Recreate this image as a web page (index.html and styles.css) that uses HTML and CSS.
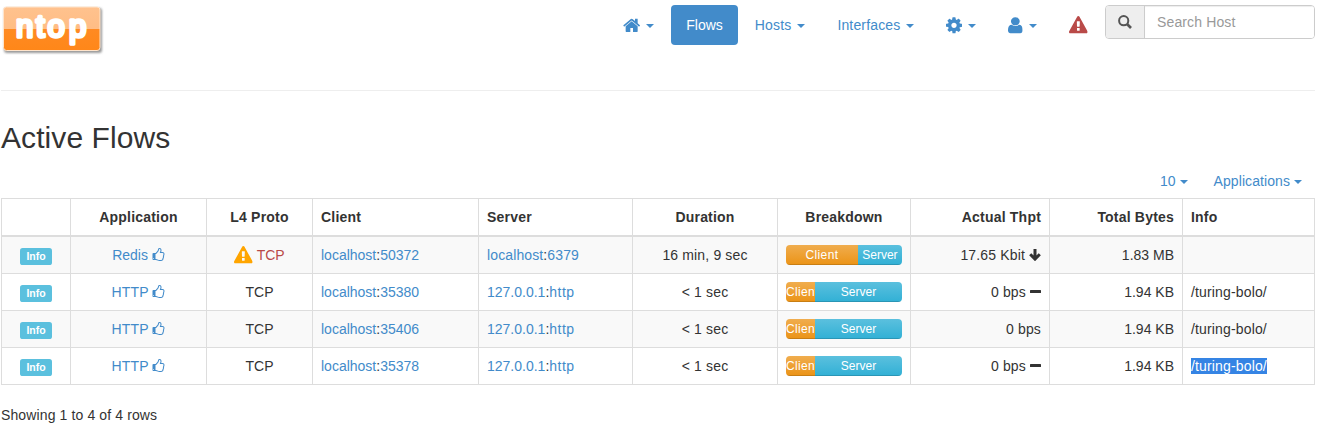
FILE: index.html
```html
<!DOCTYPE html>
<html lang="en">
<head>
<meta charset="utf-8">
<title>Active Flows</title>
<link rel="stylesheet" href="styles.css">
</head>
<body>
<svg class="defs" aria-hidden="true">
  <symbol id="home" viewBox="64 0 1664 1792"><path d="M1472 992v480q0 26-19 45t-45 19h-384v-384h-256v384h-384q-26 0-45-19t-19-45v-480q0-1 .5-3t.5-3l575-474 575 474q1 2 1 6zm223-69l-62 74q-8 9-21 11h-3q-13 0-21-7l-692-577-692 577q-12 8-24 7-13-2-21-11l-62-74q-8-10-7-23.5t11-21.5l719-599q32-26 76-26t76 26l244 204v-195q0-14 9-23t23-9h192q14 0 23 9t9 23v408l219 182q10 8 11 21.5t-7 23.5z"/></symbol>
  <symbol id="cog" viewBox="128 0 1536 1792"><path d="M1152 896q0-106-75-181t-181-75-181 75-75 181 75 181 181 75 181-75 75-181zm512-109v222q0 12-8 23t-20 13l-185 28q-19 54-39 91 35 50 107 138 10 12 10 25t-9 23q-27 37-99 108t-94 71q-12 0-26-9l-138-108q-44 23-91 38-16 136-29 186-7 28-36 28h-222q-14 0-24.5-8.5t-11.5-21.5l-28-184q-49-16-90-37l-141 107q-10 9-25 9-14 0-25-11-126-114-165-168-7-10-7-23 0-12 8-23 15-21 51-66.5t54-70.5q-27-50-41-99l-183-27q-13-2-21-12.5t-8-23.5v-222q0-12 8-23t19-13l186-28q14-46 39-92-40-57-107-138-10-12-10-24 0-10 9-23 26-36 98.5-107.5t94.500-71.500q13 0 26 10l138 107q44-23 91-38 16-136 29-186 7-28 36-28h222q14 0 24.5 8.5t11.5 21.5l28 184q49 16 90 37l142-107q9-9 24-9 13 0 25 10 129 119 165 170 7 8 7 22 0 12-8 23-15 21-51 66.5t-54 70.5q26 50 41 98l183 28q13 2 21 12.5t8 23.5z"/></symbol>
  <symbol id="user" viewBox="256 0 1280 1792" preserveAspectRatio="none"><path d="M1536 1399q0 109-62.5 187t-150.5 78h-854q-88 0-150.5-78t-62.5-187q0-85 8.5-160.5t31.5-152 58.5-131 94-89 134.5-34.5q131 128 313 128t313-128q76 0 134.5 34.5t94 89 58.5 131 31.5 152 8.5 160.5zm-256-887q0 159-112.5 271.5t-271.5 112.5-271.5-112.5-112.5-271.5 112.5-271.5 271.5-112.5 271.5 112.5 112.5 271.5z"/></symbol>
  <symbol id="warning" viewBox="0 0 1792 1792"><path d="M1024 1375v-190q0-14-9.5-23.5t-22.5-9.5h-192q-13 0-22.5 9.5t-9.5 23.5v190q0 14 9.5 23.5t22.5 9.5h192q13 0 22.5-9.5t9.5-23.5zm-2-374l18-459q0-12-10-19-13-11-24-11h-220q-11 0-24 11-10 7-10 21l17 457q0 10 10 16.5t24 6.5h185q14 0 23.5-6.5t10.5-16.5zm-14-934l768 1408q35 63-2 126-17 29-46.5 46t-63.5 17h-1536q-34 0-63.5-17t-46.5-46q-37-63-2-126l768-1408q17-31 47-49t65-18 65 18 47 49z"/></symbol>
  <symbol id="thumb" viewBox="64 0 1664 1792"><path d="M320 1344q0-26-19-45t-45-19q-27 0-45.5 19t-18.5 45q0 27 18.5 45.5t45.5 18.5q26 0 45-18.5t19-45.5zm1216-576q0-51-39-89.5t-89-38.5h-352q0-58 48-159.5t48-160.5q0-98-32-145t-128-47q-26 26-38 85t-30.5 125.5-59.5 109.5q-22 23-77 91-4 5-23 30t-31.5 41-34.5 42.5-40 44-38.5 35.5-40 27-35.5 9h-32v640h32q13 0 31.5 3t33 6.5 38 11 35 11.5 35.5 12.5 29 10.5q211 73 342 73h121q192 0 192-167 0-26-5-56 30-16 47.5-52.5t17.5-73.5-18-69q53-50 53-119 0-25-10-55.5t-25-47.5q32-1 53.5-47t21.5-81zm128-1q0 89-49 163 9 33 9 69 0 77-38 144 3 21 3 43 0 101-60 178 1 139-85 219.5t-227 80.5h-129q-96 0-189.5-22.5t-216.5-65.5q-116-40-138-40h-288q-53 0-90.5-37.5t-37.5-90.5v-640q0-53 37.5-90.5t90.5-37.5h274q36-24 137-155 58-75 107-128 24-25 35.5-85.5t30.5-126.5 62-108q39-37 90-37 84 0 151 32.5t102 101.5 35 186q0 93-48 192h176q104 0 180 76t76 179z"/></symbol>
</svg>

<header class="masthead">
  <svg class="logo" viewBox="0 0 104 56">
    <defs>
      <linearGradient id="shade" x1="0" y1="0" x2="0" y2="1"><stop offset="0" stop-color="#ffc28e"/><stop offset=".5" stop-color="#ffbd85"/><stop offset=".5" stop-color="#ff8a22"/><stop offset="1" stop-color="#ff8719"/></linearGradient>
      <filter id="soft" x="-10%" y="-10%" width="120%" height="120%"><feGaussianBlur stdDeviation=".8"/></filter>
    </defs>
    <rect class="logo-shadow" x="4" y="8" width="98" height="45" rx="3" filter="url(#soft)"/>
    <rect class="logo-tile" x="3.5" y="7" width="96.500" height="43.500" rx="3"/>
    <text class="logo-text" x="16 36 47.500 69" y="36.500">ntop</text>
  </svg>
  <nav class="nav">
    <a class="nav-item"><svg class="icon icon-home"><use href="#home"/></svg> <b class="caret"></b></a>
    <a class="nav-item active">Flows</a>
    <a class="nav-item wide">Hosts <b class="caret"></b></a>
    <a class="nav-item wide">Interfaces <b class="caret"></b></a>
    <a class="nav-item"><svg class="icon icon-cog"><use href="#cog"/></svg> <b class="caret"></b></a>
    <a class="nav-item"><svg class="icon icon-user"><use href="#user"/></svg> <b class="caret"></b></a>
    <a class="nav-item alert"><svg class="icon icon-warning"><use href="#warning"/></svg></a>
  </nav>
  <div class="search">
    <span class="search-addon"><svg class="search-icon" viewBox="0 0 14 14"><circle cx="5.700" cy="5.700" r="4.600"/><path d="M9 9l4 4"/></svg></span>
    <input class="search-input" type="text" placeholder="Search Host">
  </div>
</header>

<h2 class="title">Active Flows</h2>
<div class="toolbar">
  <a class="tool">10 <b class="caret"></b></a>
  <a class="tool">Applications <b class="caret"></b></a>
</div>

<table class="flows">
  <colgroup><col class="c-key"><col class="c-app"><col class="c-proto"><col class="c-client"><col class="c-server"><col class="c-duration"><col class="c-breakdown"><col class="c-thpt"><col class="c-bytes"><col class="c-info"></colgroup>
  <thead>
    <tr><th></th><th>Application</th><th>L4 Proto</th><th class="left">Client</th><th class="left">Server</th><th>Duration</th><th>Breakdown</th><th class="right">Actual Thpt</th><th class="right">Total Bytes</th><th class="left">Info</th></tr>
  </thead>
  <tbody>
    <tr>
      <td><span class="label">Info</span></td>
      <td><a>Redis <svg class="thumb"><use href="#thumb"/></svg></a></td>
      <td class="danger"><svg class="icon icon-warning amber"><use href="#warning"/></svg> TCP</td>
      <td class="left"><a>localhost</a>:<a>50372</a></td>
      <td class="left endpoint"><a>localhost</a>:<a>6379</a></td>
      <td class="wide">16 min, 9 sec</td>
      <td><div class="progress"><div class="bar client" style="width:62%">Client</div><div class="bar server" style="width:38%">Server</div></div></td>
      <td class="right wide">17.65 Kbit <svg class="trend" viewBox="0 0 12 12"><path d="M6 0v9M1.200 5.300L6 10.100l4.800-4.800"/></svg></td>
      <td class="right">1.83 MB</td>
      <td class="left"></td>
    </tr>
    <tr>
      <td><span class="label">Info</span></td>
      <td><a class="endpoint">HTTP <svg class="thumb"><use href="#thumb"/></svg></a></td>
      <td>TCP</td>
      <td class="left"><a>localhost</a>:<a>35380</a></td>
      <td class="left"><a>127.0.0.1</a>:<a class="scheme">http</a></td>
      <td class="wide">&lt; 1 sec</td>
      <td><div class="progress"><div class="bar client" style="width:25%">Client</div><div class="bar server" style="width:75%">Server</div></div></td>
      <td class="right wide">0 bps <svg class="minus" viewBox="0 0 11 12"><rect y="4" width="11" height="3" rx=".5"/></svg></td>
      <td class="right">1.94 KB</td>
      <td class="left wide">/turing-bolo/</td>
    </tr>
    <tr>
      <td><span class="label">Info</span></td>
      <td><a class="endpoint">HTTP <svg class="thumb"><use href="#thumb"/></svg></a></td>
      <td>TCP</td>
      <td class="left"><a>localhost</a>:<a>35406</a></td>
      <td class="left"><a>127.0.0.1</a>:<a class="scheme">http</a></td>
      <td class="wide">&lt; 1 sec</td>
      <td><div class="progress"><div class="bar client" style="width:25%">Client</div><div class="bar server" style="width:75%">Server</div></div></td>
      <td class="right wide">0 bps</td>
      <td class="right">1.94 KB</td>
      <td class="left wide">/turing-bolo/</td>
    </tr>
    <tr>
      <td><span class="label">Info</span></td>
      <td><a class="endpoint">HTTP <svg class="thumb"><use href="#thumb"/></svg></a></td>
      <td>TCP</td>
      <td class="left"><a>localhost</a>:<a>35378</a></td>
      <td class="left"><a>127.0.0.1</a>:<a class="scheme">http</a></td>
      <td class="wide">&lt; 1 sec</td>
      <td><div class="progress"><div class="bar client" style="width:25%">Client</div><div class="bar server" style="width:75%">Server</div></div></td>
      <td class="right wide">0 bps <svg class="minus" viewBox="0 0 11 12"><rect y="4" width="11" height="3" rx=".5"/></svg></td>
      <td class="right">1.94 KB</td>
      <td class="left wide"><span class="selected">/turing-bolo/</span></td>
    </tr>
  </tbody>
</table>
<p class="summary">Showing 1 to 4 of 4 rows</p>
</body>
</html>
```
FILE: styles.css
```css
* { box-sizing: border-box; }
body {
  margin: 0;
  padding: 0 6px 0 1px;
  overflow: hidden;
  background: #fff;
  color: #333;
  font: 14px/20px "Liberation Sans", Arial, sans-serif;
}
a { color: #428bca; text-decoration: none; }
.defs { display: none; }
.wide { letter-spacing: .15px; }

.masthead {
  display: flex;
  align-items: flex-start;
  height: 91px;
  padding-top: 5px;
  border-bottom: 1px solid #eee;
}
.logo { width: 104px; height: 56px; margin: -5px 0 0 -1px; }
.logo-shadow { fill: #999; }
.logo-tile { fill: url(#shade); stroke: #ffe4cb; stroke-width: 1; }
.logo-text {
  font: 31px "Liberation Sans", Arial, sans-serif;
  fill: #fff;
  stroke: #fff;
  stroke-width: 3.4;
  stroke-linejoin: round;
}

.nav { display: flex; gap: 2px; margin-left: auto; }
.nav-item {
  height: 40px;
  padding: 10px 15px;
  border-radius: 4px;
  white-space: nowrap;
}
.nav-item.active { background: #428bca; color: #fff; }
.nav-item.alert { color: #b94a48; }
.caret {
  display: inline-block;
  width: 0;
  height: 0;
  margin-left: 2px;
  vertical-align: middle;
  border-top: 4px solid;
  border-right: 4px solid transparent;
  border-left: 4px solid transparent;
}
.icon { height: 18.67px; margin: -4px 0; vertical-align: -1px; fill: currentColor; }
.icon-home { width: 17.33px; }
.icon-cog { width: 16px; }
.icon-user { width: 14.67px; }
.icon-warning { width: 18.67px; }
.amber { fill: orange; }

.search {
  display: flex;
  width: 210px;
  height: 34px;
  margin-left: 2.500px;
  border: 1px solid #ccc;
  border-radius: 4px;
  overflow: hidden;
}
.search-addon {
  display: flex;
  flex: 0 0 39px;
  align-items: center;
  justify-content: center;
  background: #eee;
  border-right: 1px solid #ccc;
}
.search-icon { width: 14px; height: 14px; fill: none; stroke: #555; stroke-width: 2; }
.search-icon path { stroke-width: 2.6; }
.search-input {
  flex: 1;
  min-width: 0;
  padding: 0 12px;
  border: 0;
  box-shadow: inset 0 1px 1px rgba(0, 0, 0, .075);
  font: inherit;
  letter-spacing: .13px;
}
.search-input::placeholder { color: #999; }

.title {
  margin: 30px 0 10px;
  font-size: 30px;
  font-weight: normal;
  line-height: 33px;
  letter-spacing: .08px;
}
.toolbar { display: flex; justify-content: flex-end; height: 34px; }
.tool { padding: 7px 13px; letter-spacing: .08px; }
.tool .caret { margin-left: 0; }

.flows { width: 1314px; table-layout: fixed; border-collapse: collapse; }
.c-key { width: 69px; }
.c-app { width: 136px; }
.c-proto { width: 106px; }
.c-client { width: 166px; }
.c-server { width: 154px; }
.c-duration { width: 145px; }
.c-breakdown { width: 133px; }
.c-thpt { width: 139px; }
.c-bytes { width: 133px; }
.c-info { width: 132px; }
.flows th, .flows td {
  height: 37px;
  padding: 8px;
  border: 1px solid #ddd;
  text-align: center;
  vertical-align: top;
  white-space: nowrap;
}
.flows th { border-bottom-width: 2px; letter-spacing: .2px; }
.flows .left { text-align: left; }
.flows .right { text-align: right; }
.flows tbody tr:nth-child(odd) { background: #f9f9f9; }
.danger { color: #b94a48; }
.endpoint { letter-spacing: .12px; }
.scheme { letter-spacing: .5px; }
.thumb { width: 13px; height: 14px; vertical-align: -2px; fill: currentColor; }
.label {
  display: inline;
  padding: .2em .6em .3em;
  border-radius: .25em;
  background: #5bc0de;
  color: #fff;
  font-size: 10.5px;
  font-weight: bold;
  line-height: 1;
}
.trend { width: 12px; height: 12px; vertical-align: -1px; fill: none; stroke: #333; stroke-width: 3; }
.minus { width: 11px; height: 12px; vertical-align: -1px; fill: #333; }

.progress {
  display: flex;
  height: 20px;
  border-radius: 4px;
  overflow: hidden;
}
.bar {
  overflow: hidden;
  color: #fff;
  font-size: 12px;
  letter-spacing: 0;
  box-shadow: inset 0 -1px 0 rgba(0, 0, 0, .15);
}
.client { background: linear-gradient(#f0ad4e, #eb9316); letter-spacing: .35px; }
.server { background: linear-gradient(#5bc0de, #31b0d5); }
.selected { background: #3584e4; color: #fff; }
.summary { margin: 20px 0 0; letter-spacing: .12px; }
```
